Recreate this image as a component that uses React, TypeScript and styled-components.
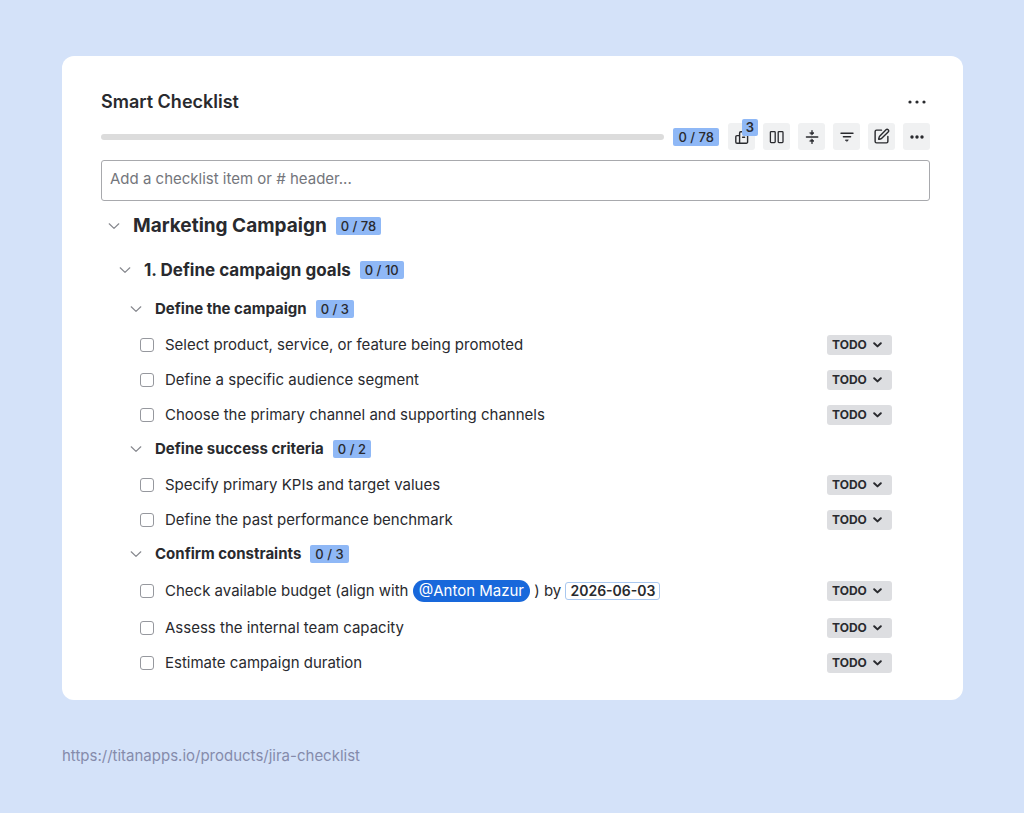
import React, { useState } from "react";
import styled, { createGlobalStyle } from "styled-components";
import { SquarePen } from "lucide-react";

const GlobalStyle = createGlobalStyle`
  *, *::before, *::after { box-sizing: border-box; }
  html { background: #d4e2f9; }
  body {
    margin: 0;
    color: #292a2e;
    font-family: Inter, "Liberation Sans", sans-serif;
    font-size: 15px;
    line-height: 20px;
  }
  button, input, select { font: inherit; color: inherit; margin: 0; }
`;

const Page = styled.main`
  padding: 56px 61px 48px 62px;
`;

const Card = styled.section`
  padding: 34px 33px 20px 39px;
  border-radius: 12px;
  background: #fff;
`;

const CardHeader = styled.header`
  display: flex;
  align-items: center;
  justify-content: space-between;
  height: 24px;
`;

const Title = styled.h1`
  margin: 0;
  font-size: 18px;
  line-height: 24px;
  font-weight: 600;
`;

const GhostButton = styled.button`
  display: grid;
  place-items: center;
  width: 27px;
  height: 24px;
  padding: 0;
  border: 0;
  background: none;
  cursor: pointer;
`;

const Toolbar = styled.div`
  display: flex;
  align-items: center;
  gap: 9px;
  margin-top: 9px;
`;

const Progress = styled.div`
  flex: 1;
  height: 6px;
  border-radius: 3px;
  background: #dcdcdc;
`;

const Actions = styled.div`
  display: flex;
  gap: 8px;
`;

const IconButton = styled.button`
  position: relative;
  display: grid;
  place-items: center;
  width: 27px;
  height: 27px;
  padding: 0;
  border: 0;
  border-radius: 3px;
  background: #f0f1f2;
  cursor: pointer;
`;

const Count = styled.span`
  flex: none;
  padding: 0 5px;
  border-radius: 2px;
  background: #8fb8f6;
  font-size: 13px;
  line-height: 18px;
  font-weight: 500;
`;

const Notice = styled.span`
  position: absolute;
  top: -4px;
  right: -3px;
  width: 16px;
  border-radius: 2px;
  background: #8fb8f6;
  font-size: 13px;
  line-height: 17px;
  font-weight: 600;
  text-align: center;
`;

const AddInput = styled.input`
  display: block;
  width: 100%;
  height: 41px;
  margin: 10px 0 3px;
  padding: 0 8px 4px;
  border: 1px solid #a8a9ad;
  border-radius: 3px;
  background: #fff;
  &::placeholder { color: #74767c; opacity: 1; }
`;

const levels = {
  1: { size: 19, weight: 700, height: 44, indent: 6, after: 0 },
  2: { size: 17, weight: 700, height: 44, indent: 17, after: 0 },
  3: { size: 15, weight: 700, height: 34, indent: 28, after: 1 },
};
type Level = keyof typeof levels;

const HeadingRow = styled.div<{ $level: Level }>`
  display: flex;
  align-items: center;
  height: ${(p) => levels[p.$level].height}px;
  margin-bottom: ${(p) => levels[p.$level].after}px;
  padding-left: ${(p) => levels[p.$level].indent}px;
`;

const Toggle = styled.button<{ $open: boolean }>`
  display: grid;
  place-items: center;
  width: 14px;
  height: 18px;
  margin-right: 12px;
  padding: 0;
  border: 0;
  background: none;
  color: #85878d;
  cursor: pointer;
  transform: rotate(${(p) => (p.$open ? 0 : -90)}deg);
`;

const HeadingText = styled.h2<{ $level: Level }>`
  margin: 0 9px 0 0;
  font-size: ${(p) => levels[p.$level].size}px;
  line-height: 24px;
  font-weight: ${(p) => levels[p.$level].weight};
`;

const List = styled.ul`
  margin: 0;
  padding: 0;
  list-style: none;
`;

const Item = styled.li<{ $tall: boolean }>`
  display: flex;
  align-items: center;
  justify-content: space-between;
  height: ${(p) => (p.$tall ? 38 : 35)}px;
  padding: 0 38px 0 39px;
`;

const ItemLabel = styled.label`
  display: flex;
  align-items: center;
  gap: 11px;
`;

const Checkbox = styled.input`
  appearance: none;
  width: 14px;
  height: 14px;
  border: 1px solid #96989e;
  border-radius: 3px;
  background: #fff;
  &:checked { background: #1868db; border-color: #1868db; }
`;

const Mention = styled.span`
  display: inline-block;
  padding: 0 6px;
  border-radius: 11px;
  background: #1868db;
  color: #fff;
  line-height: 22px;
`;

const DueDate = styled.time`
  display: inline-block;
  padding: 0 4px;
  border: 1px solid #a9c8f0;
  border-radius: 3px;
  font-size: 14px;
  line-height: 16px;
  font-weight: 600;
`;

const StatusBox = styled.span`
  position: relative;
  flex: none;
`;

const StatusSelect = styled.select`
  appearance: none;
  display: block;
  width: 65px;
  height: 20px;
  padding: 0 0 0 5px;
  border: 0;
  border-radius: 3px;
  background: #dddee1;
  font-size: 12px;
  line-height: 20px;
  font-weight: 700;
`;

const StatusArrow = styled.svg`
  position: absolute;
  top: 7px;
  right: 10px;
  pointer-events: none;
`;

const Source = styled.a`
  display: inline-block;
  margin-top: 46px;
  color: #858bab;
  font-size: 15px;
  line-height: 20px;
  text-decoration: none;
`;

const Dots = ({ width, step, r }: { width: number; step: number; r: number }) => (
  <svg width={width} height="6" viewBox={`0 0 ${width} 6`} fill="currentColor" aria-hidden>
    {[-1, 0, 1].map((i) => (
      <circle key={i} cx={width / 2 + i * step} cy="3" r={r} />
    ))}
  </svg>
);

const stroke = {
  width: 16,
  height: 16,
  viewBox: "0 0 16 16",
  fill: "none",
  stroke: "currentColor",
  strokeWidth: 1.4,
  strokeLinecap: "round",
  strokeLinejoin: "round",
  "aria-hidden": true,
} as const;

const ReleaseIcon = () => (
  <svg {...stroke}>
    <path d="M5.6 14.2V4a1.2 1.2 0 0 1 1.2-1.2h5.6a1.2 1.2 0 0 1 1.2 1.2v9a1.2 1.2 0 0 1-1.2 1.2H3A1.2 1.2 0 0 1 1.8 13V7.8A1.2 1.2 0 0 1 3 6.6h2.6M8.6 8.2h2" />
  </svg>
);

const ColumnsIcon = () => (
  <svg {...stroke} strokeWidth={1.3}>
    <rect x="1.4" y="2.6" width="4.8" height="11" rx="0.8" />
    <rect x="9.2" y="2.6" width="4.8" height="11" rx="0.8" />
  </svg>
);

const CollapseIcon = () => (
  <svg {...stroke}>
    <path d="M2.4 8h11.4M8 1.6v2M8 14.4v-2" strokeWidth="1.3" />
    <path d="M6 3.8h4L8 5.8zM6 12.2h4L8 10.2z" fill="currentColor" strokeWidth="0.8" />
  </svg>
);

const FilterIcon = () => (
  <svg {...stroke}>
    <path d="M2 4.2h12M4.4 7.8h7.2" />
    <path d="M6.7 11h2.6L8 12.2z" fill="currentColor" strokeWidth="0.8" />
  </svg>
);

const Chevron = () => (
  <svg width="12" height="8" viewBox="0 0 12 8" fill="none" stroke="currentColor" strokeWidth="1.2" strokeLinecap="round" strokeLinejoin="round" aria-hidden>
    <path d="M1.2 1.8 6 6.4l4.8-4.6" />
  </svg>
);

const Heading = ({ level, text, count, open, onToggle }: {
  level: Level; text: string; count: string; open: boolean; onToggle: () => void;
}) => (
  <HeadingRow $level={level}>
    <Toggle type="button" $open={open} aria-expanded={open} aria-label={`Toggle ${text}`} onClick={onToggle}>
      <Chevron />
    </Toggle>
    <HeadingText $level={level} as={`h${level + 1}` as "h2"}>{text}</HeadingText>
    <Count>{count}</Count>
  </HeadingRow>
);

type Entry = { id: string; text: React.ReactNode; tall?: boolean };

const groups: { title: string; count: string; items: Entry[] }[] = [
  {
    title: "Define the campaign",
    count: "0 / 3",
    items: [
      { id: "select", text: "Select product, service, or feature being promoted" },
      { id: "audience", text: "Define a specific audience segment" },
      { id: "channel", text: "Choose the primary channel and supporting channels" },
    ],
  },
  {
    title: "Define success criteria",
    count: "0 / 2",
    items: [
      { id: "kpi", text: "Specify primary KPIs and target values" },
      { id: "benchmark", text: "Define the past performance benchmark" },
    ],
  },
  {
    title: "Confirm constraints",
    count: "0 / 3",
    items: [
      {
        id: "budget",
        tall: true,
        text: (
          <>
            Check available budget (align with <Mention>@Anton Mazur</Mention> ) by{" "}
            <DueDate dateTime="2026-06-03">2026-06-03</DueDate>
          </>
        ),
      },
      { id: "capacity", text: "Assess the internal team capacity" },
      { id: "duration", text: "Estimate campaign duration" },
    ],
  },
];

const ChecklistItem = ({ entry }: { entry: Entry }) => (
  <Item $tall={!!entry.tall}>
    <ItemLabel htmlFor={entry.id}>
      <Checkbox type="checkbox" id={entry.id} />
      <span>{entry.text}</span>
    </ItemLabel>
    <StatusBox>
      <StatusSelect aria-label="Status" defaultValue="TODO">
        <option>TODO</option>
      </StatusSelect>
      <StatusArrow width="9" height="6" viewBox="0 0 9 6" fill="none" stroke="currentColor" strokeWidth="2" strokeLinecap="round" strokeLinejoin="round" aria-hidden>
        <path d="M1.2 1.2 4.5 4.4 7.8 1.2" />
      </StatusArrow>
    </StatusBox>
  </Item>
);

export default function App() {
  const [closed, setClosed] = useState<Record<string, boolean>>({});
  const toggle = (key: string) => setClosed((c) => ({ ...c, [key]: !c[key] }));

  return (
    <>
      <GlobalStyle />
      <Page>
        <Card>
          <CardHeader>
            <Title>Smart Checklist</Title>
            <GhostButton type="button" aria-label="Panel menu"><Dots width={20} step={7} r={1.6} /></GhostButton>
          </CardHeader>
          <Toolbar>
            <Progress role="progressbar" aria-label="Progress" aria-valuenow={0} aria-valuemax={78} />
            <Count>0 / 78</Count>
            <Actions>
              <IconButton type="button" aria-label="Updates"><ReleaseIcon /><Notice>3</Notice></IconButton>
              <IconButton type="button" aria-label="Columns"><ColumnsIcon /></IconButton>
              <IconButton type="button" aria-label="Collapse"><CollapseIcon /></IconButton>
              <IconButton type="button" aria-label="Filter"><FilterIcon /></IconButton>
              <IconButton type="button" aria-label="Edit"><SquarePen size={17} strokeWidth={2} /></IconButton>
              <IconButton type="button" aria-label="More"><Dots width={16} step={5} r={1.7} /></IconButton>
            </Actions>
          </Toolbar>
          <AddInput aria-label="Add item" placeholder="Add a checklist item or # header..." />
          <Heading level={1} text="Marketing Campaign" count="0 / 78" open={!closed.root} onToggle={() => toggle("root")} />
          {!closed.root && (
            <>
              <Heading level={2} text="1. Define campaign goals" count="0 / 10" open={!closed.goals} onToggle={() => toggle("goals")} />
              {!closed.goals && groups.map((g) => (
                <section key={g.title}>
                  <Heading level={3} text={g.title} count={g.count} open={!closed[g.title]} onToggle={() => toggle(g.title)} />
                  {!closed[g.title] && (
                    <List>
                      {g.items.map((entry) => <ChecklistItem key={entry.id} entry={entry} />)}
                    </List>
                  )}
                </section>
              ))}
            </>
          )}
        </Card>
        <Source href="https://titanapps.io/products/jira-checklist">https://titanapps.io/products/jira-checklist</Source>
      </Page>
    </>
  );
}
